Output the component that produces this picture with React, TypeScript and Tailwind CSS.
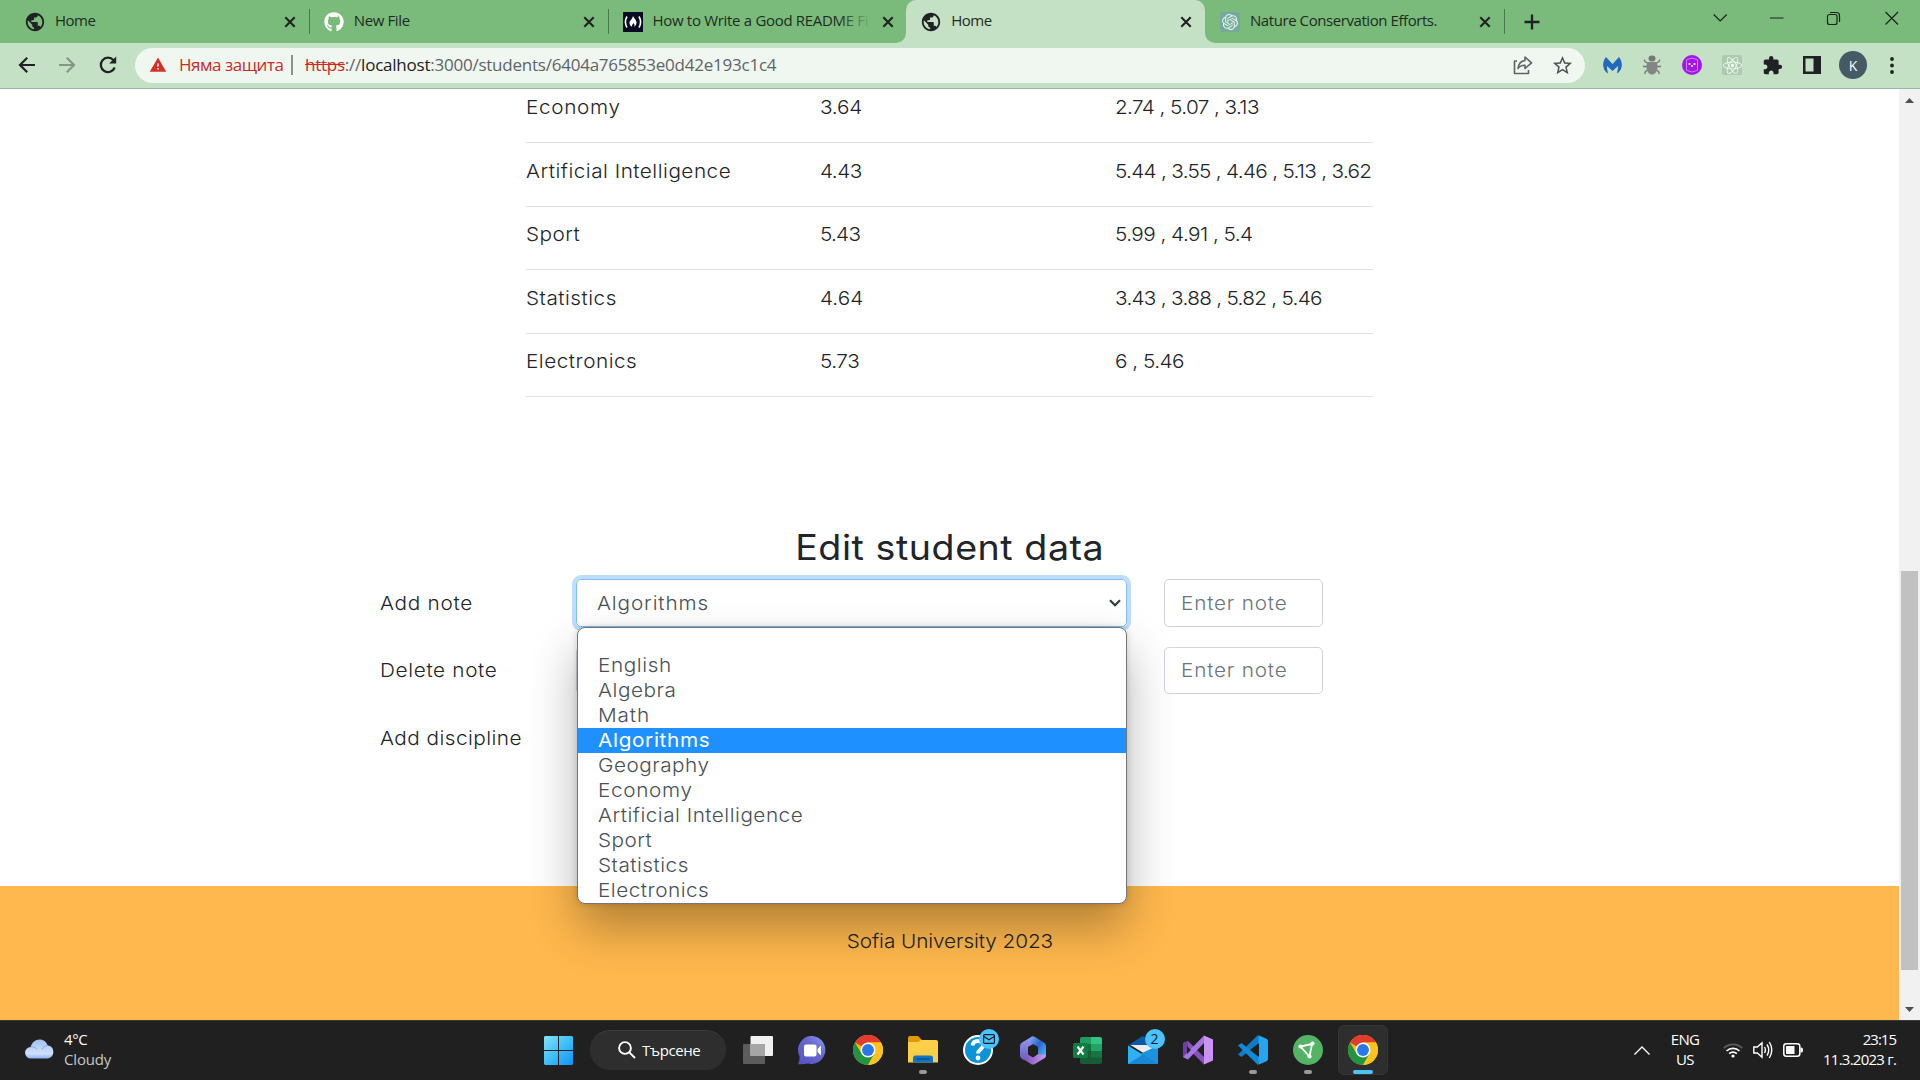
import { useLayoutEffect, useRef, type ReactNode } from "react";
import { FaGithub, FaReact } from "react-icons/fa";
import { SiOpenai } from "react-icons/si";
import { MdExtension, MdPublic, MdStarBorder, MdWarning } from "react-icons/md";

/* Sets a line of text to an exact measure by widening its glyphs and adjusting its tracking. */
function Fit({ w, stretch = 1, className = "", children }: { w: number; stretch?: number; className?: string; children: ReactNode }) {
  const ref = useRef<HTMLSpanElement>(null);
  useLayoutEffect(() => {
    const el = ref.current;
    if (!el) return;
    el.style.letterSpacing = "0px";
    const n = (el.textContent || "").length;
    el.style.letterSpacing = `${(w / stretch - el.offsetWidth) / n}px`;
    if (stretch !== 1) el.style.transform = `scaleX(${stretch})`;
  }, [w, stretch]);
  return (
    <span ref={ref} className={`inline-block shrink-0 whitespace-pre ${className || "origin-left"}`}>
      {children}
    </span>
  );
}

/* Page text: wide geometric look. */
function Wide({ w, center, children }: { w: number; center?: boolean; children: ReactNode }) {
  return (
    <Fit w={w} stretch={1.075} className={center ? "origin-center" : "origin-left"}>
      {children}
    </Fit>
  );
}

function Close() {
  return (
    <svg width="12" height="12" viewBox="0 0 12 12" fill="none" stroke="#202124" strokeWidth="2.1">
      <path d="M1.3 1.3l9.4 9.4M10.7 1.3L1.3 10.7" />
    </svg>
  );
}

function Tab({ icon, title, w, active, sep, fade }: { icon: ReactNode; title: string; w: number; active?: boolean; sep?: boolean; fade?: boolean }) {
  return (
    <div className={`relative flex h-[43px] w-[298.75px] shrink-0 items-center ${active ? "rounded-t-[10px] bg-[#c5e1c5]" : ""}`}>
      <div className="ml-[14px] flex w-[22px] justify-center">{icon}</div>
      <div className="relative ml-[9px] w-[218px] overflow-hidden pb-[3px] text-[15px] leading-5 text-[#1e2b20]">
        <Fit w={w}>{title}</Fit>
        {fade && <div className="absolute inset-y-0 right-0 w-8 bg-linear-to-r from-[#7abb7c]/0 to-[#7abb7c]" />}
      </div>
      <div className="ml-[11px] flex"><Close /></div>
      {sep && <div className="absolute top-[9px] right-[-1px] h-[25px] w-px bg-[#4a7a4c]" />}
      {active && (
        <>
          <div className="absolute bottom-0 -left-2.5 size-2.5 overflow-hidden bg-[#c5e1c5]"><div className="size-full rounded-br-[10px] bg-[#7abb7c]" /></div>
          <div className="absolute -right-2.5 bottom-0 size-2.5 overflow-hidden bg-[#c5e1c5]"><div className="size-full rounded-bl-[10px] bg-[#7abb7c]" /></div>
        </>
      )}
    </div>
  );
}

function FccIcon() {
  return (
    <svg width="20" height="20" viewBox="0 0 20 20">
      <rect width="20" height="20" fill="#0a0a23" />
      <path d="M4 4.500Q.8 10 4 15.500M16 4.500Q19.200 10 16 15.500" fill="none" stroke="#fff" strokeWidth="1.600" />
      <path d="M10 3.500c.3 2.500 3.500 4 3.500 7.300 0 2-1.200 3.200-2.500 3.900 1-1.700.4-2.700-.6-3.700-.2 1-.8 1.200-1.200 1.900-.4.700-.2 1.300.1 1.900-1.600-.6-2.800-1.800-2.800-3.800C6.500 8.500 9.800 7 10 3.500z" fill="#fff" />
    </svg>
  );
}

function Cell({ children }: { children: ReactNode }) {
  return <div className="flex h-full w-10 shrink-0 items-center justify-center">{children}</div>;
}

function Browser() {
  return (
    <>
      <div className="flex h-[43px] shrink-0 bg-[#7abb7c] pl-2.5">
        <Tab icon={<MdPublic size={22} color="#202124" />} title="Home" w={40} sep />
        <Tab icon={<FaGithub size={20} color="#fff" />} title="New File" w={56} sep />
        <Tab icon={<FccIcon />} title="How to Write a Good README Fi" w={216} fade />
        <Tab icon={<MdPublic size={22} color="#202124" />} title="Home" w={40} active />
        <Tab icon={<div className="flex size-5 items-center justify-center rounded-[3px] bg-[#74aa9c]"><SiOpenai size={16} color="#e8f5f0" /></div>} title="Nature Conservation Efforts." w={187} sep />
        <div className="ml-5 flex items-center">
          <svg width="16" height="16" viewBox="0 0 16 16" stroke="#202124" strokeWidth="2.300"><path d="M8 .5v15M.5 8h15" /></svg>
        </div>
        <svg className="mt-[9px] ml-[173px]" width="190" height="20" viewBox="0 0 190 20" fill="none" stroke="#1a231a" strokeWidth="1.200">
          <path d="M0.700 6l6.500 6.500L13.700 6M57 9.500h13.500M172.500 3.500l12.500 12.500M185 3.500L172.500 16" transform="translate(0 -.5)" />
          <rect x="114.500" y="5.500" width="9.500" height="10" rx="2" />
          <path d="M117 3.500h6.500q3 0 3 3v6.500" />
        </svg>
      </div>
      <div className="flex h-[46px] shrink-0 items-center border-b border-[#9fb5a0] bg-[#c5e1c5] pb-[1px]">
        <div className="ml-[7px] flex h-full">
          <Cell><svg width="18" height="18" viewBox="0 0 18 18" fill="none" stroke="#202124" strokeWidth="2.200"><path d="M17 9H2.500M9.200 1.700L2 9l7.200 7.300" /></svg></Cell>
          <Cell><svg width="18" height="18" viewBox="0 0 18 18" fill="none" stroke="#859687" strokeWidth="2.200"><path d="M1 9h14.500M8.800 1.700L16 9l-7.200 7.300" /></svg></Cell>
          <Cell><svg className="ml-[2px]" width="20" height="20" viewBox="0 0 20 20" fill="none" stroke="#202124" strokeWidth="2.200"><path d="M16.700 12.500A7.200 7.200 0 1 1 15.500 5.200" /><path d="M18.200 1.500v7h-7z" fill="#202124" stroke="none" /></svg></Cell>
        </div>
        <div className="ml-2 flex h-[35px] w-[1450px] items-center rounded-full bg-[#f0f7f0] text-[17px] text-[#5f6368]">
          <MdWarning className="ml-[14px]" size={18} color="#d0312b" />
          <Fit w={104} className="ml-3 text-[#cc2a25]">Няма защита</Fit>
          <div className="ml-[8px] h-5 w-[1.500px] bg-[#8b928c]" />
          <Fit w={471} className="ml-3">
            <span className="text-[#cc2a25] line-through">https</span>://<span className="text-[#202124]">localhost</span>:3000/students/6404a765853e0d42e193c1c4
          </Fit>
          <div className="flex-1" />
          <svg className="mr-[18px]" width="20" height="20" viewBox="0 0 20 20" fill="none" stroke="#5f6368" strokeWidth="1.600" strokeLinejoin="round"><path d="M4 6H1.500v12.500h14V15" /><path d="M12 2l6.500 5.800L12 13.500v-3.200c-3.500 0-5.500 1-7 3.200.5-4.500 3-7.500 7-8z" /></svg>
          <MdStarBorder className="mr-[11px]" size={23} color="#50545a" />
        </div>
        <div className="ml-[7px] flex h-full">
          <Cell><svg width="19" height="17" viewBox="0 0 19 17"><path d="M3 0l6.500 7L16 0c4 5 4 12-1.500 16.500-1-1 .8-4 .5-7.500L9.500 14 4 9c-.3 3.500 1.500 6.500.5 7.500C-1 12-1 5 3 0z" fill="#2368ba" /></svg></Cell>
          <Cell>
            <svg width="18" height="20" viewBox="0 0 18 20"><path d="M4.500 8L2 6.500 1 4.500M4 11.500H0M4.500 15L2 17v2M13.500 8L16 6.500l1-2M14 11.500h4M13.500 15l2.500 2v2" fill="none" stroke="#777" strokeWidth="1.300" /><ellipse cx="9" cy="3.500" rx="3.500" ry="3" fill="#777" /><path d="M4 7h10l.5 5c0 5-3 7.500-5.500 7.500S3.500 17 3.500 12z" fill="#858585" /></svg>
          </Cell>
          <Cell>
            <svg width="20" height="20" viewBox="0 0 20 20"><circle cx="10" cy="10" r="10" fill="#a316e8" /><path d="M4.500 4.500v11M15.500 4.500v11M5 4.500q5-3 10 0M5 15.500q5 3 10 0" fill="none" stroke="#cf80f5" strokeWidth="1" /><path d="M6.500 9h2M11.500 9h2M9 11h2" stroke="#fff" strokeWidth="1.300" /></svg>
          </Cell>
          <Cell><div className="flex size-5 items-center justify-center rounded-[2px] bg-[#adc9b0]"><FaReact size={19} color="#f4faf4" /></div></Cell>
          <Cell><MdExtension size={21} color="#202124" /></Cell>
          <Cell><svg width="18" height="18" viewBox="0 0 18 18"><path d="M0 0h18v18H0zM2.500 2.500v13h8v-13z" fill="#202124" fillRule="evenodd" /></svg></Cell>
          <Cell><div className="ml-[2px] flex size-7 items-center justify-center rounded-full bg-[#455a64] text-[14px] text-white">K</div></Cell>
          <Cell><svg width="4" height="17" viewBox="0 0 4 17" fill="#202124"><circle cx="2" cy="2" r="1.900" /><circle cx="2" cy="8.500" r="1.900" /><circle cx="2" cy="15" r="1.900" /></svg></Cell>
        </div>
      </div>
    </>
  );
}

const rows = [
  { name: "Economy", nw: 95, avg: "3.64", aw: 42, notes: "2.74 , 5.07 , 3.13", w: 144, h: "h-[54px] pb-[17px]" },
  { name: "Artificial Intelligence", nw: 205, avg: "4.43", aw: 42, notes: "5.44 , 3.55 , 4.46 , 5.13 , 3.62", w: 256, h: "h-16 pb-[7px]" },
  { name: "Sport", nw: 54, avg: "5.43", aw: 40, notes: "5.99 , 4.91 , 5.4", w: 137, h: "h-[63px] pb-[7px]" },
  { name: "Statistics", nw: 91, avg: "4.64", aw: 43, notes: "3.43 , 3.88 , 5.82 , 5.46", w: 207, h: "h-16 pb-[7px]" },
  { name: "Electronics", nw: 111, avg: "5.73", aw: 39, notes: "6 , 5.46", w: 69, h: "h-[63px] pb-[7px]" },
];

const options: [string, number][] = [
  ["English", 74], ["Algebra", 78], ["Math", 52], ["Algorithms", 112], ["Geography", 111], ["Economy", 95],
  ["Artificial Intelligence", 205], ["Sport", 54], ["Statistics", 91], ["Electronics", 111],
];

function SelectMenu() {
  return (
    <div className="absolute top-[47px] left-0 z-10 h-[277px] w-[550px] rounded-lg border border-[#767676] bg-white pt-[25px] shadow-[0_24px_48px_rgba(0,0,0,0.3),0_0_6px_rgba(0,0,0,0.16)]">
      {options.map(([o, w]) => (
        <div key={o} className={`flex h-[25px] items-center pl-5 ${o === "Algorithms" ? "bg-[#1e90ff] font-normal text-white" : "text-[#495057]"}`}>
          <Wide w={w}>{o}</Wide>
        </div>
      ))}
    </div>
  );
}

function NoteInput({ h }: { h: string }) {
  return (
    <div className={`ml-[37px] flex w-[159px] items-center rounded-[5px] border border-[#ced4da] pl-4 text-[#6c757d] ${h}`}>
      <Wide w={106}>Enter note</Wide>
    </div>
  );
}

function Page() {
  return (
    <div className="flex h-[931px] shrink-0 font-['Inter',sans-serif] text-[19.300px] font-light text-[#212529]">
      <div className="flex w-[1899px] flex-col">
        <div className="ml-[526px] w-[847px]">
          {rows.map((r) => (
            <div key={r.name} className={`flex items-center border-b border-[#dee2e6] ${r.h}`}>
              <div className="w-[294px]"><Wide w={r.nw}>{r.name}</Wide></div>
              <div className="w-[295px]"><Wide w={r.aw}>{r.avg}</Wide></div>
              <Wide w={r.w}>{r.notes}</Wide>
            </div>
          ))}
        </div>
        <h2 className="mt-[129px] flex h-[42px] items-center justify-center text-[35px] font-normal"><Wide center w={309}>Edit student data</Wide></h2>
        <div className="mt-[11px] flex items-center pl-[380px]">
          <div className="w-[196px]"><Wide w={93}>Add note</Wide></div>
          <div className="relative flex h-12 w-[551px] items-center justify-between rounded-[5px] border border-[#80bdff] pr-[5px] pl-5 text-[#495057] shadow-[0_0_0_4px_#bfdeff]">
            <Wide w={112}>Algorithms</Wide>
            <svg width="12" height="8" viewBox="0 0 12 8" fill="none" stroke="#343a40" strokeWidth="2.200"><path d="M1 1.200l5 5 5-5" /></svg>
            <SelectMenu />
          </div>
          <NoteInput h="h-12" />
        </div>
        <div className="mt-5 flex items-center pl-[380px]">
          <div className="w-[196px]"><Wide w={117}>Delete note</Wide></div>
          <div className="h-[47px] w-[551px] rounded-[5px] border border-[#ced4da]" />
          <NoteInput h="h-[47px]" />
        </div>
        <div className="mt-5 flex h-12 items-center pl-[380px]"><Wide w={142}>Add discipline</Wide></div>
        <div className="mt-auto flex h-[134px] justify-center bg-[#ffb84d] pt-[41px]"><Wide center w={206}>Sofia University 2023</Wide></div>
      </div>
      <div className="flex w-[21px] flex-col items-center bg-[#f1f1f1]">
        <svg className="mt-[9px] shrink-0" width="9" height="5" viewBox="0 0 9 5"><path d="M0 5l4.500-5L9 5z" fill="#505050" /></svg>
        <div className="mt-[468px] h-[399px] w-[17px] shrink-0 bg-[#c1c1c1]" />
        <svg className="mt-auto mb-2" width="9" height="5" viewBox="0 0 9 5"><path d="M0 0l4.500 5L9 0z" fill="#505050" /></svg>
      </div>
    </div>
  );
}

function Chrome() {
  return (
    <svg width="30" height="30" viewBox="0 0 48 48">
      <circle cx="24" cy="24" r="24" fill="#fbbc05" />
      <path d="M24 24L3.200 12A24 24 0 0 1 44.800 12H24z" fill="#e33b2e" />
      <path d="M3.200 12A24 24 0 0 0 24 48l10.400-18L24 24l-10.400 6z" fill="#229342" />
      <path d="M24 12h20.800A24 24 0 0 1 24 48l10.400-18z" fill="#fcc31e" />
      <circle cx="24" cy="24" r="12" fill="#fff" />
      <circle cx="24" cy="24" r="9.500" fill="#2a77ea" />
    </svg>
  );
}

function TaskIcon({ children, dot, active }: { children: ReactNode; dot?: boolean; active?: boolean }) {
  return (
    <div className="flex h-full w-[55px] shrink-0 items-center justify-center">
      <div className={`relative flex size-[50px] items-center justify-center rounded-md ${active ? "border border-[#353535] bg-[#2e2e2e]" : ""}`}>
        {children}
        {dot && <div className="absolute bottom-[1px] h-1 w-2 rounded-full bg-[#9a9a9a]" />}
        {active && <div className="absolute bottom-0 h-1 w-5 rounded-full bg-[#4cc2ff]" />}
      </div>
    </div>
  );
}

function Taskbar() {
  return (
    <div className="flex h-[60px] shrink-0 items-center border-t border-[#3b3b38] bg-[#202020] pb-px text-[15px] leading-5 text-white">
      <svg className="-mt-[3px] ml-[25px]" width="30" height="20" viewBox="0 0 30 20">
        <defs><linearGradient id="cl" x1="0" y1="0" x2="0" y2="1"><stop offset="0" stopColor="#a3bef0" /><stop offset=".75" stopColor="#cfe0fa" /><stop offset="1" stopColor="#8db2ef" /></linearGradient></defs>
        <path d="M6 19.500a5.800 5.800 0 0 1-.3-11.600C7 3.500 10.300.5 14.500.5c4 0 7 2.300 8 5.800a6.700 6.700 0 0 1 .5 13.200z" fill="url(#cl)" />
        <path d="M5.700 8c3-.5 5 .3 6.500 2.500M17 10.500c1-2.500 3-4 5.500-4" fill="none" stroke="#86a9e8" strokeWidth="1" />
      </svg>
      <div className="ml-[9px] w-[480px] pb-[3px]">
        <div><Fit w={23}>4°C</Fit></div>
        <div className="text-[#c6c6c6]"><Fit w={47}>Cloudy</Fit></div>
      </div>
      <svg width="29" height="29" viewBox="0 0 29 29">
        <defs><linearGradient id="win" x1="0" y1="0" x2="1" y2="1"><stop offset="0" stopColor="#85e2fc" /><stop offset=".5" stopColor="#3fbff9" /><stop offset="1" stopColor="#0f93f5" /></linearGradient></defs>
        <path d="M1 0h13v14H0V1zM15 0h13l1 1v13H15zM0 15h14v14H1l-1-1zM15 15h14v13l-1 1H15z" fill="url(#win)" />
      </svg>
      <div className="ml-[17px] flex h-10 w-[136px] items-center rounded-full border-t border-[#3c3c3c] bg-[#2e2e2e] pb-px pl-7">
        <svg width="18" height="18" viewBox="0 0 18 18" fill="none" stroke="#fff" strokeWidth="1.900"><circle cx="7" cy="7" r="5.900" /><path d="M11.300 11.300L17 17" /></svg>
        <Fit w={58} className="ml-[6px]">Търсене</Fit>
      </div>
      <div className="ml-[4px] flex h-full">
        <TaskIcon><svg width="30" height="28" viewBox="0 0 30 28"><rect y="8" width="22" height="20" rx="1" fill="#5c5c5c" /><rect x="7.500" width="22.500" height="20" rx="1" fill="#f0f0f0" /><rect x="7.500" y="8" width="14.500" height="12" fill="#a6a6a6" /></svg></TaskIcon>
        <TaskIcon>
          <svg width="29" height="29" viewBox="0 0 29 29">
            <defs><linearGradient id="tm" x1="0" y1="1" x2="1" y2="0"><stop offset="0" stopColor="#5353c4" /><stop offset=".6" stopColor="#6a67cf" /><stop offset="1" stopColor="#86a0ec" /></linearGradient></defs>
            <path d="M15 0a14 14 0 1 1-5 27.500Q5 28.500 0 28.200q2-3 1.500-8A14 14 0 0 1 15 0z" fill="url(#tm)" />
            <rect x="6" y="8.500" width="12.500" height="12" rx="2" fill="#fff" /><path d="M19.500 13l3.500-3.500v10L19.500 16z" fill="#fff" />
          </svg>
        </TaskIcon>
        <TaskIcon><Chrome /></TaskIcon>
        <TaskIcon dot>
          <svg width="30" height="28" viewBox="0 0 30 28">
            <path d="M0 2q0-2 2-2h8l4 4v6H0z" fill="#dd9a0c" /><path d="M0 6h10l3-2h15q2 0 2 2v20.500H0z" fill="#fdcf48" />
            <path d="M5 26.500V22q0-2.500 2.500-2.500h15q2.500 0 2.500 2.500v4.500z" fill="#0f75c4" /><path d="M8.500 23h13" stroke="#0a4b87" strokeWidth="1.300" />
          </svg>
        </TaskIcon>
        <TaskIcon>
          <svg width="30" height="30" viewBox="0 0 30 30"><circle cx="15" cy="15" r="14" fill="#0b94d8" stroke="#fff" strokeWidth="2" /><path d="M9.500 10.500Q10 6 15 6t5 4.500c0 3.500-5 4-5 8" fill="none" stroke="#fff" strokeWidth="3.800" /><circle cx="15" cy="23" r="2.400" fill="#fff" /></svg>
          <div className="absolute top-[4px] right-[4px] flex size-5 items-center justify-center rounded-full bg-[#4cc2ff]">
            <svg width="12" height="10" viewBox="0 0 12 10" fill="none" stroke="#10202b" strokeWidth="1.200"><rect x=".6" y=".6" width="10.800" height="8.800" rx="1" /><path d="M.8 2.500L6 5.800l5.200-3.300" /></svg>
          </div>
        </TaskIcon>
        <TaskIcon>
          <svg width="26" height="29" viewBox="0 0 26 29">
            <defs>
              <linearGradient id="m1" x1="0" y1="0" x2="1" y2="1"><stop offset="0" stopColor="#7fb2f5" /><stop offset=".45" stopColor="#2f62d0" /><stop offset="1" stopColor="#50c8f2" /></linearGradient>
              <linearGradient id="m2" x1="0" y1="0" x2="1" y2="0"><stop offset="0" stopColor="#7a49b4" /><stop offset="1" stopColor="#c79bf0" /></linearGradient>
              <linearGradient id="m3" x1="0" y1="0" x2="0" y2="1"><stop offset="0" stopColor="#9a9af0" /><stop offset="1" stopColor="#6b5fc0" /></linearGradient>
            </defs>
            <path d="M12 .5L2 6.500Q0 7.700 0 10v9q0 3 3 4.500 4 1 5-2.500V11l9-5z" fill="url(#m3)" />
            <path d="M11.500.8q1.500-.9 3 0l9.500 5.700q2 1.200 2 3.500v9q0 2.300-2 3.500l-6-4v-7.500l-7-4Q8.500 4 11.500.8z" fill="url(#m1)" />
            <path d="M2 22.500l9.500 5.700q1.500.8 3 0l9.500-5.700q2-1.200 2-3.500L18 18l-5 3.500-5-3q-.5 5-6 4z" fill="url(#m2)" />
            <path d="M13 8.500l5 2.800v6.400l-5 2.900-5-2.900v-6.400z" fill="#202020" />
          </svg>
        </TaskIcon>
        <TaskIcon>
          <svg width="29" height="27" viewBox="0 0 29 27">
            <path d="M7 2q0-2 2-2h9v7H7z" fill="#1f9c60" /><path d="M18 0h9q2 0 2 2v5H18z" fill="#32c481" /><path d="M7 7h11v7H7z" fill="#14703f" /><path d="M18 7h11v7H18z" fill="#22a366" /><path d="M7 14h22v11q0 2-2 2H9q-2 0-2-2z" fill="#185c37" /><path d="M18 14h11v6.500H18z" fill="#14773f" />
            <rect y="6" width="15" height="15" rx="1.500" fill="#107c41" /><path d="M4.500 9.500l6 8M10.500 9.500l-6 8" stroke="#fff" strokeWidth="2.100" />
          </svg>
        </TaskIcon>
        <TaskIcon>
          <svg width="30" height="28" viewBox="0 0 30 28">
            <path d="M0 9.500L13.500.8q1.500-.9 3 0L30 9.500z" fill="#0c59a6" /><path d="M2.500 9h25l-9 10z" fill="#ececec" /><path d="M0 9.500L30 28H0z" fill="#2cb2f2" /><path d="M30 9.500L12 18l18 10z" fill="#1b93df" /><path d="M0 28h30L15 18.500z" fill="#1688d6" />
          </svg>
          <div className="absolute top-[4px] right-[3px] flex size-5 items-center justify-center rounded-full bg-[#4cc2ff] text-[14px] text-[#10202b]">2</div>
        </TaskIcon>
        <TaskIcon>
          <svg width="30" height="30" viewBox="0 0 30 30">
            <path d="M0 8l5-2 17 17-1 6.500z" fill="#8653bd" /><path d="M0 8v14l5 2.500v-18z" fill="#6d3da8" /><path d="M0 22l5 2.500L22 7l-1-6.500z" fill="#a775df" /><path d="M21 .5l9 4v21l-9 4z" fill="#c893f3" /><path d="M4 11v8l3.800-4zM21 10.500v9L15 15z" fill="#202020" />
          </svg>
        </TaskIcon>
        <TaskIcon dot>
          <svg width="30" height="30" viewBox="0 0 30 30">
            <path d="M0 19.500L20 0l2 7L3.500 22z" fill="#0c7dc9" /><path d="M0 10.500L20 30l2-7L3.500 8z" fill="#118ad8" /><path d="M20.500.3l8 3.500q1.500.8 1.500 2.200v18q0 1.400-1.500 2.200l-8 3.500z" fill="#26a4ee" /><path d="M21 8.500v13L12.500 15z" fill="#202020" />
          </svg>
        </TaskIcon>
        <TaskIcon dot>
          <svg width="30" height="30" viewBox="0 0 30 30"><circle cx="15" cy="15" r="15" fill="#55b365" /><path d="M7.500 11.500L19 9l-2.500 12.500z" fill="none" stroke="#fff" strokeWidth="1.800" /><circle cx="7.500" cy="11.500" r="2.100" fill="#fff" /><circle cx="19.500" cy="8.500" r="2.100" fill="#fff" /><circle cx="16.500" cy="21.500" r="2.100" fill="#fff" /></svg>
        </TaskIcon>
        <TaskIcon active><Chrome /></TaskIcon>
      </div>
      <div className="ml-auto flex items-center pr-6">
        <svg width="16" height="9" viewBox="0 0 16 9" fill="none" stroke="#fff" strokeWidth="1.300"><path d="M.5 8.500L8 1l7.500 7.500" /></svg>
        <div className="ml-5 w-[30px] pb-[3px] text-center"><Fit w={29}>ENG</Fit><Fit w={18}>US</Fit></div>
        <svg className="ml-[23px]" width="20" height="16" viewBox="0 0 20 16" fill="none" stroke="#fff" strokeWidth="1.700">
          <path d="M.8 6.200a13 13 0 0 1 18.400 0" stroke="#5c5c5c" /><path d="M3.500 9a9.200 9.200 0 0 1 13 0M6.200 11.700a5.400 5.400 0 0 1 7.600 0" /><circle cx="10" cy="14" r="1.600" fill="#fff" stroke="none" />
        </svg>
        <svg className="ml-[10px]" width="20" height="18" viewBox="0 0 20 18" fill="none" stroke="#fff" strokeWidth="1.400"><path d="M.8 6h3.500L9 1.800v14.400L4.300 12H.8zM11.500 6q1.800 3 0 6M14 3.500q3.500 5.500 0 11M16.300 1q5 8 0 16" /></svg>
        <svg className="ml-[10px]" width="20" height="14" viewBox="0 0 20 14"><rect x=".8" y=".8" width="16" height="12.400" rx="2.500" fill="none" stroke="#fff" strokeWidth="1.500" /><rect x="3" y="3" width="8.500" height="8" fill="#fff" /><path d="M17.500 4.500h1q1.500 0 1.500 2.500t-1.500 2.500h-1z" fill="#fff" /></svg>
        <div className="ml-5 w-[73px] pb-[3px] text-right"><Fit w={33}>23:15</Fit><Fit w={73}>11.3.2023 г.</Fit></div>
      </div>
    </div>
  );
}

export default function App() {
  return (
    <div className="flex h-[1080px] w-[1920px] flex-col overflow-hidden bg-white font-['Open_Sans','Noto_Sans',sans-serif]">
      <Browser />
      <Page />
      <Taskbar />
    </div>
  );
}
